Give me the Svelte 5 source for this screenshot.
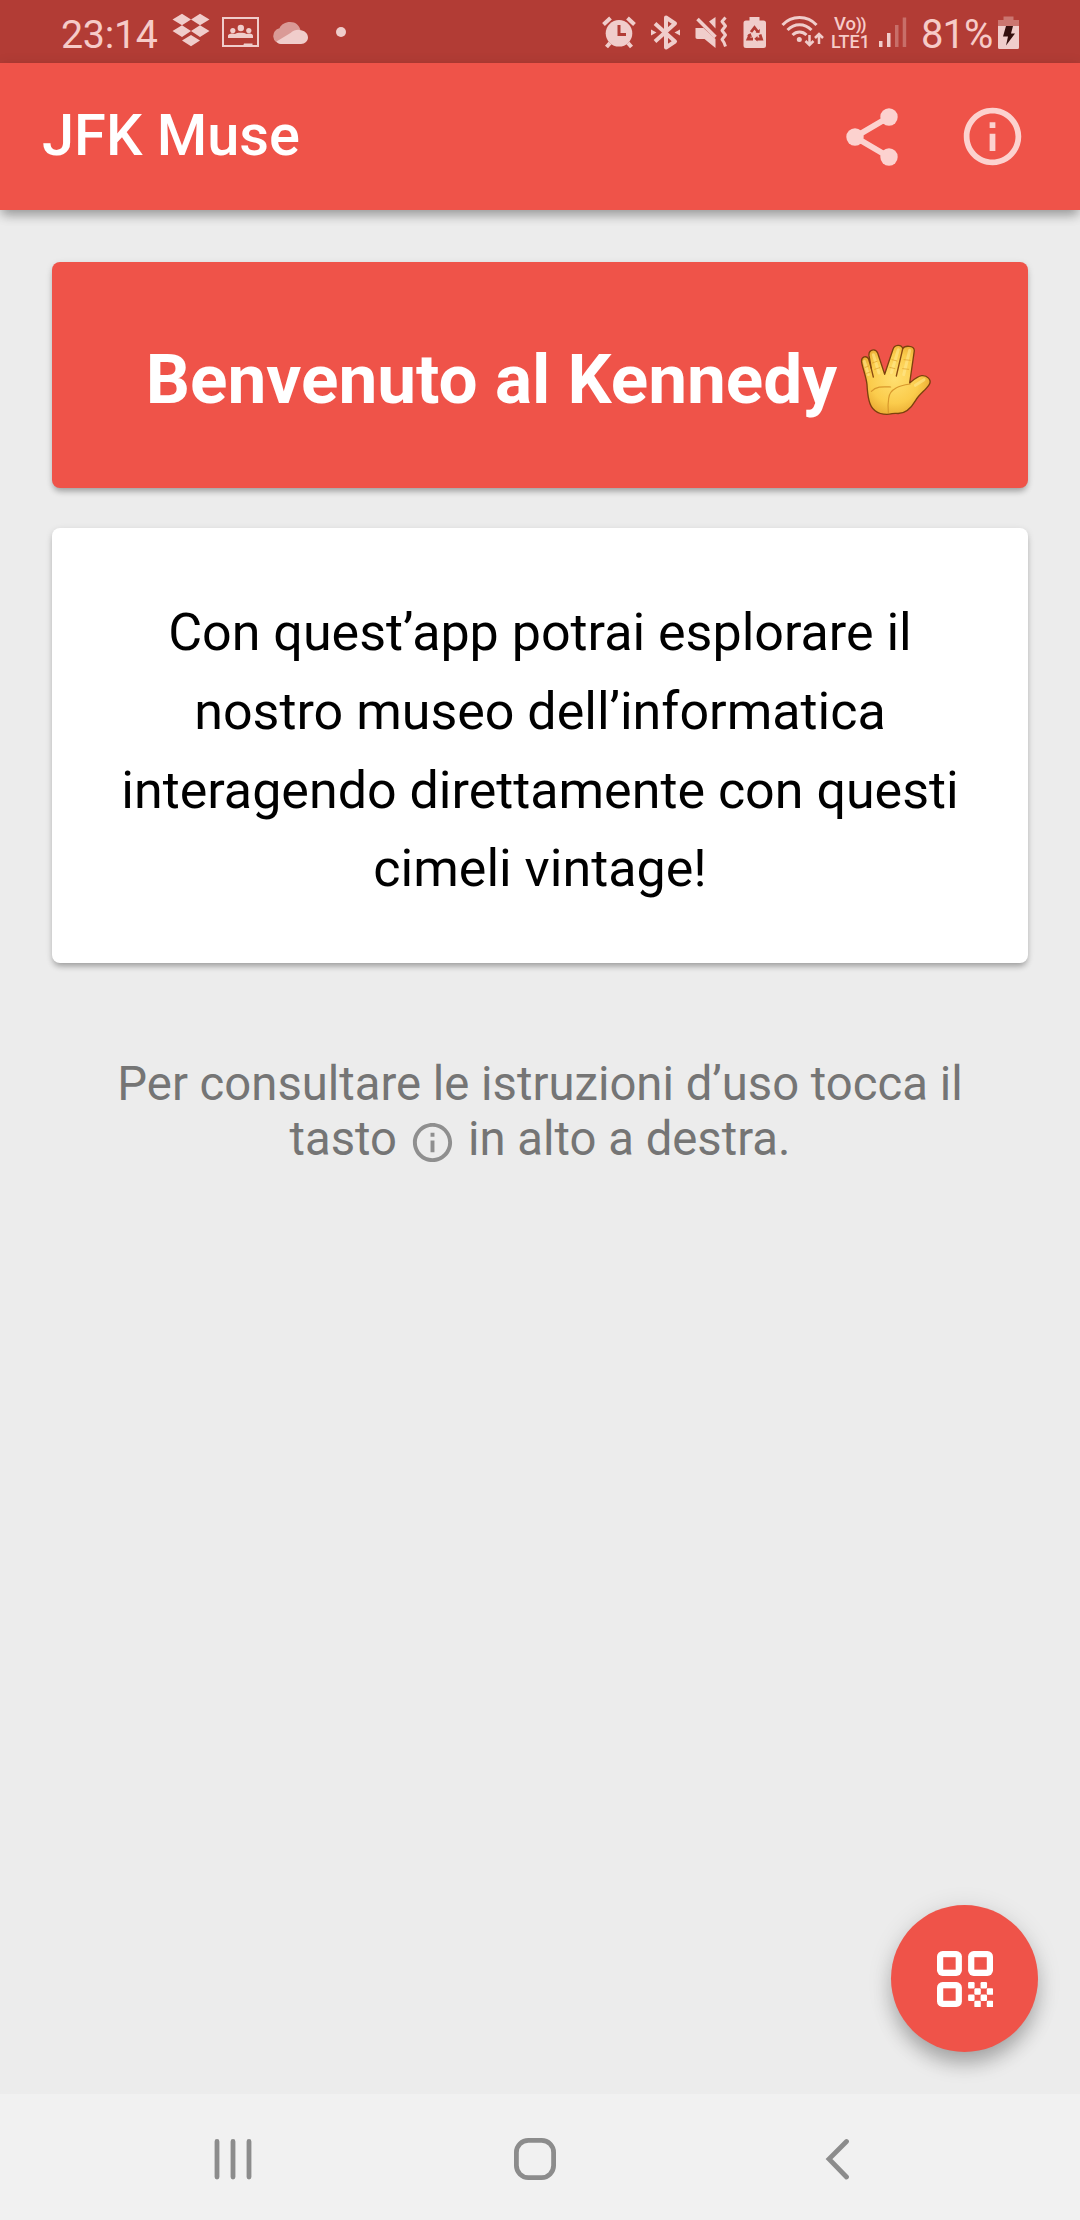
<script>
  const modules = [
    [5, 5], [7, 5], [6, 6], [8, 6], [5, 7], [7, 7], [6, 8], [8, 8],
  ];
  const finders = [[0, 0], [5, 0], [0, 5]];
</script>

{#snippet info(cls)}
  <svg class={cls} viewBox="0 0 24 24">
    <path d="M11 7h2v2h-2zm0 4h2v6h-2zm1-9C6.48 2 2 6.48 2 12s4.48 10 10 10 10-4.48 10-10S17.52 2 12 2zm0 18c-4.41 0-8-3.59-8-8s3.59-8 8-8 8 3.59 8 8-3.59 8-8 8z" />
  </svg>
{/snippet}

<div class="screen">
  <div class="status">
    <div class="group">
      <span class="clock">23:14</span>
      <svg width="40" height="63" viewBox="171 0 40 63">
        <path d="M182 13.7l9 5.8-9 5.8-9.500-5.800zM200 13.700l9.500 5.800-9.500 5.800-9-5.800zM182 25.300l9 5.800-9 5.800-9.500-5.800zM200 25.300l9.500 5.800-9.500 5.800-9-5.800zM191 34.900l9 5.700-9 5.700-9-5.700z" />
      </svg>
      <svg class="ml-photo" width="39" height="63" viewBox="221 0 39 63">
        <rect x="223" y="18" width="35" height="28" fill="none" stroke="#f0cdcb" stroke-width="2" />
        <circle cx="240.800" cy="28" r="3.200" /><circle cx="232.800" cy="30.500" r="2.600" /><circle cx="248.800" cy="30.500" r="2.600" />
        <path d="M228 38v-2c0-2 3-2.500 5-2.500l2 .5c1.500-1.800 10-1.800 11.500 0l2-.5c2 0 4.500.5 4.500 2.500v2zM244 43.500h8.500V46H243z" />
      </svg>
      <svg class="ml-cloud" width="36" height="63" viewBox="273 0 36 63">
        <path opacity=".65" d="M281 44a8 8 0 0 1-1.500-15.800C281 24.500 285.500 22 290 22c6 0 9 3.500 10.500 8l-15 9z" />
        <path d="M276.500 41.500l14-8.500c3-3 7-3.500 9-3 4.500.3 8.500 3 8.500 7.500 0 3.500-3 6.500-7 6.500h-20c-2 0-3.500-1-4.500-2.500z" />
      </svg>
      <svg class="ml-dot" width="12" height="63" viewBox="335 0 12 63"><circle cx="341" cy="32" r="5" /></svg>
    </div>
    <div class="group">
      <svg width="249" height="63" viewBox="602 0 249 63">
        <!-- alarm -->
        <circle cx="619" cy="33.300" r="13.300" />
        <g fill="none" stroke="#f0cdcb" stroke-width="4">
          <path d="M603.500 24.500l7-6.500M627.500 18l7 6.500M610 43l-3.500 4M628 43l3.500 4" />
        </g>
        <path d="M619 25v9.500h7" fill="none" stroke="#b23c35" stroke-width="3" />
        <!-- bluetooth -->
        <path d="M655 23.500l20 18-9 6V17.500l9 6-20 18" fill="none" stroke="#f0cdcb" stroke-width="4" stroke-linejoin="round" />
        <path d="M651 29.500l5.500 3-5.500 3zM680 29.500l-5.500 3 5.500 3z" />
        <!-- muted -->
        <path d="M695.500 28h8l12 11v9l-11-9h-7c-1.500 0-2-1-2-2zM715.500 17v11.500l-6.500-7z" />
        <path d="M697.500 19l18 18" fill="none" stroke="#f0cdcb" stroke-width="3.500" />
        <path d="M725.500 17.500l-3.500 4 3.500 4.500-3.500 4.500 3.500 4.500-3.500 4.500 2 3 1.500 4" fill="none" stroke="#f0cdcb" stroke-width="3" stroke-linejoin="round" />
        <!-- battery saver -->
        <path d="M749.500 17h10v3.500h4a2.500 2.500 0 0 1 2.500 2.500v22.500a2.500 2.500 0 0 1-2.500 2.500h-17.500a2.500 2.500 0 0 1-2.500-2.500V23a2.500 2.500 0 0 1 2.500-2.500h3.500z" />
        <path d="M751 32l3.500-4.500 3.500 4.500M760 34.500l1.500 4.500h-5M753 39h-5l2-4.500" fill="none" stroke="#b23c35" stroke-width="2.800" />
        <path d="M755.500 32.500l4 .5.500-4zM757.500 36v5.500l-3.200-2.800zM747 35.500l3.500-2.500 1.500 4z" fill="#b23c35" />
        <!-- wifi -->
        <g fill="none" stroke="#f0cdcb" stroke-width="3">
          <path d="M782.500 25c9-10 25-10 34 0M787.500 30c7-7 17-7 24 0M792.500 35c4-4 10-4 14 0" />
        </g>
        <circle cx="799.300" cy="39.500" r="2.500" />
      </svg>
      <svg class="over-wifi" width="20" height="63" viewBox="804 0 20 63">
        <path d="M809.500 35v10M805.500 41l4 4 4-4M819 44V34.500M815 38l4-4 4 4" fill="none" stroke="#f0cdcb" stroke-width="2.500" />
      </svg>
      <span class="volte"><span class="vo">Vo<b>))</b></span><span>LTE1</span></span>
      <svg class="ml-signal" width="28" height="63" viewBox="879 0 28 63">
        <path d="M879 41h3.500v6H879zM887 33h3.500v14H887z" />
        <path opacity=".35" d="M895 25h3.500v22H895zM902.700 17.500h3.500V47h-3.500z" />
      </svg>
      <span class="percent">81%</span>
      <svg class="ml-battery" width="21" height="63" viewBox="998 0 21 63">
        <path opacity=".4" d="M1003.500 16.500h10V20h5.500v6h-21v-6h5.500z" />
        <path d="M998 26h21v21.500a1.500 1.500 0 0 1-1.500 1.500h-18a1.500 1.500 0 0 1-1.500-1.500z" />
        <path d="M1006 26h7l-2 7.500h4l-9 12 2-9h-5z" fill="#35100e" />
      </svg>
    </div>
  </div>

  <header>
    <h1>JFK Muse</h1>
    <div class="actions">
      <svg class="share" viewBox="0 0 52 58">
        <path d="M43 9L9 29l34 20" fill="none" stroke="#fcd2cf" stroke-width="6" />
        <circle cx="43" cy="9" r="8.700" /><circle cx="9" cy="29" r="8.700" /><circle cx="43" cy="49" r="8.700" />
      </svg>
      {@render info('bar-info')}
    </div>
  </header>

  <main>
    <section class="card welcome">
      <h2>Benvenuto al Kennedy</h2>
      <svg class="hand" viewBox="114 72 216 219">
        <defs>
          <radialGradient id="skin" cx="48%" cy="48%" r="60%">
            <stop offset="0" stop-color="#ffdf70" />
            <stop offset=".6" stop-color="#fbcc4c" />
            <stop offset="1" stop-color="#e5a22c" />
          </radialGradient>
        </defs>
        <path d="M135 197C133 175 122 148 119 130C116 112 135 108 140 121L148 148L141 110C139 92 160 86 167 102L188 166L213 91C217 76 239 75 242 89C247 79 277 78 277 95L263 192C275 182 286 172 299 170C315 168 330 183 322 196C312 213 292 225 281 244C266 270 245 286 222 283C214 282 208 286 195 286C166 286 147 270 141 244C138 232 136 216 135 197Z" fill="url(#skin)" stroke="#7c410e" stroke-width="4" stroke-linejoin="round" />
        <g fill="none" stroke-linecap="round" stroke-linejoin="round">
          <path d="M147 145L154 174M242 90L223 171" stroke="#8a4a10" stroke-width="4" />
          <path d="M127 127L139 167M154 107L171 162M229 92L208 161M263 94L245 167M280 199L306 182" stroke="#ffe88e" stroke-width="9" opacity=".6" />
          <path d="M148 217C163 201 182 203 206 204M264 195C235 200 203 207 200 238C197 255 198 267 199 280" stroke="#d8982c" stroke-width="3.500" />
          <path d="M130 145l10-4M134 163l11-4M151 132l14-5M158 151l15-5M210 122l15 4M203 145l16 4M246 122l19 2M242 149l18 2" stroke="#e0a02c" stroke-width="3" opacity=".7" />
        </g>
      </svg>
    </section>
    <section class="card about">
      <p>Con quest’app potrai esplorare il<br />nostro museo dell’informatica<br />interagendo direttamente con questi<br />cimeli vintage!</p>
    </section>
    <p class="hint">
      <span>Per consultare le istruzioni d’uso tocca il</span>
      <span class="second">tasto {@render info('hint-info')} in alto a destra.</span>
    </p>
  </main>

  <button class="fab" aria-label="QR">
    <svg viewBox="0 0 9 9">
      {#each finders as [x, y]}
        <rect {x} {y} width="4" height="4" rx=".9" fill="#fff" />
        <path d="M{x + 1} {y + 1}h2v2h-2z" fill="#ef5349" />
      {/each}
      {#each modules as [x, y]}
        <rect {x} {y} width="1.040" height="1.040" rx=".18" fill="#fff" />
      {/each}
    </svg>
  </button>

  <nav>
    <svg viewBox="0 0 1080 126">
      <g fill="none" stroke="#8c8c8c" stroke-width="4.800" stroke-linecap="round">
        <path d="M217 47.500v35.500M233 47.500v35.500M249 47.500v35.500M846.500 47.500L829 65l17.500 18" />
        <rect x="516.400" y="46.400" width="37.200" height="37.200" rx="12" />
      </g>
    </svg>
  </nav>
</div>

<style>
  :global(body) { margin: 0; }
  .screen {
    width: 1080px; height: 2220px; display: flex; flex-direction: column;
    background: #ececec; font-family: Roboto, sans-serif; position: relative; overflow: hidden;
  }
  svg { display: block; flex: none; }
  .status {
    height: 63px; background: #b23c35; display: flex; justify-content: space-between;
    box-sizing: border-box; padding: 0 61px; color: #f6cbc8; flex: none;
  }
  .status svg { fill: #f0cdcb; }
  .group { display: flex; align-items: center; }
  .clock { width: 110px; font-size: 39.400px; line-height: 47px; padding-top: 6px; letter-spacing: -.3px; }
  .ml-photo { margin-left: 10px; }
  .ml-cloud { margin-left: 13px; }
  .ml-dot { margin-left: 26px; }
  .over-wifi { margin-left: -47px; }
  .volte {
    display: flex; flex-direction: column; width: 40px; margin-left: 7px; padding-top: 3px;
    font-size: 18px; line-height: 17.500px; font-weight: 500; white-space: nowrap;
  }
  .vo { padding-left: 3px; font-size: 18.500px; }
  .vo b { font-size: 16px; letter-spacing: -1px; }
  .ml-signal { margin-left: 8px; }
  .percent { width: 76px; margin-left: 14px; font-size: 40px; line-height: 47px; padding-top: 6px; letter-spacing: -1px; }
  .ml-battery { margin-left: 1px; }
  header {
    height: 147px; flex: none; background: #ef5349; color: #fff; display: flex; align-items: center;
    justify-content: space-between; box-sizing: border-box; padding: 0 53px 0 42px;
    box-shadow: 0 7px 10px -2px rgba(0, 0, 0, .28), 0 3px 14px rgba(0, 0, 0, .12);
  }
  h1 { margin: 0; padding-bottom: 4px; font-size: 57.750px; font-weight: 500; line-height: 68px; }
  .actions { display: flex; align-items: center; fill: #fcd2cf; }
  .share { width: 52px; height: 58px; margin-right: 60px; }
  .bar-info { width: 69px; height: 69px; }
  main { flex: 1; padding: 52px 52px 0; }
  .card {
    border-radius: 8px; display: flex; align-items: center; justify-content: center;
    box-shadow: 0 5px 6px -2px rgba(0, 0, 0, .26), 0 2px 7px rgba(0, 0, 0, .13);
  }
  .welcome { height: 226px; background: #ef5349; color: #fff; }
  h2 { margin: 0; font-size: 69.300px; line-height: 80px; font-weight: 700; padding-top: 10px; white-space: nowrap; }
  .hand { width: 72px; height: 73px; margin: 0 2px 0 23px; padding-top: 9px; }
  .about { height: 435px; margin-top: 40px; background: #fff; color: #000; text-align: center; }
  .about p { margin: 0; padding-top: 12px; font-size: 52px; line-height: 78.750px; white-space: nowrap; }
  .hint {
    margin: 94px 0 0; color: #757575; font-size: 47.250px; line-height: 55px;
    display: flex; flex-direction: column; align-items: center; white-space: nowrap;
  }
  .second { display: flex; align-items: center; gap: 12px; }
  .hint-info { width: 47px; height: 47px; fill: #8f8f8f; margin-top: 6px; }
  .fab {
    position: absolute; left: 891px; top: 1905px; width: 147px; height: 147px; border: 0; padding: 0;
    border-radius: 50%; background: #ef5349; display: grid; place-items: center;
    box-shadow: 0 14px 20px -3px rgba(0, 0, 0, .25), 0 4px 26px rgba(0, 0, 0, .12);
  }
  .fab svg { width: 56px; height: 56px; }
  nav { height: 126px; flex: none; background: #f1f1f1; }
</style>
